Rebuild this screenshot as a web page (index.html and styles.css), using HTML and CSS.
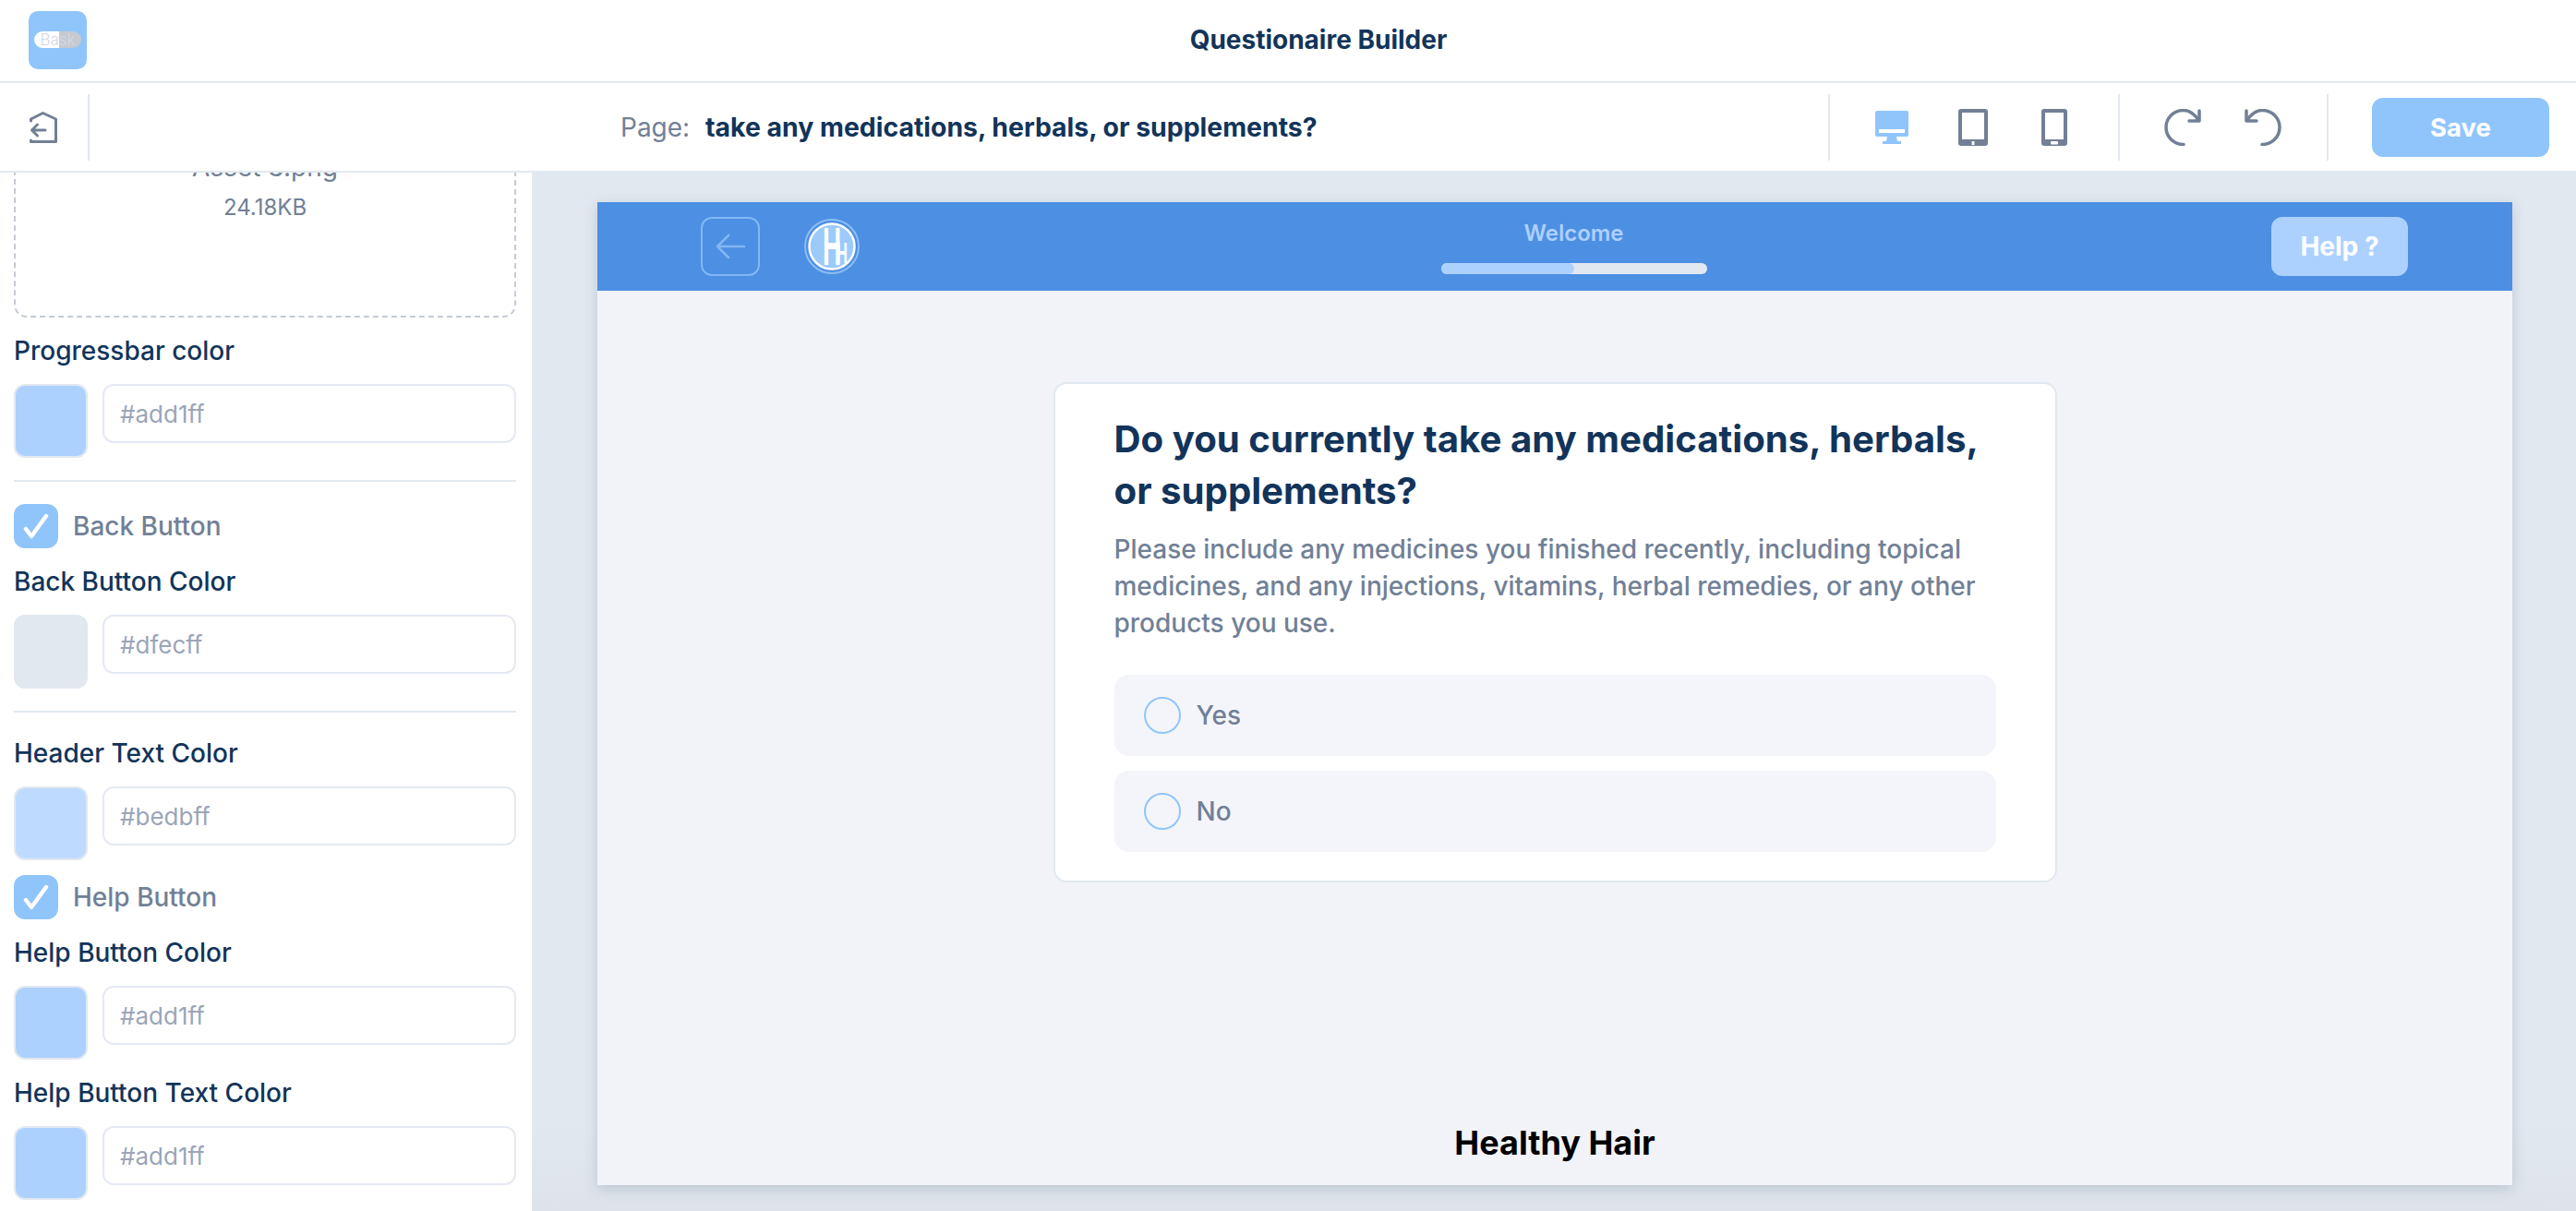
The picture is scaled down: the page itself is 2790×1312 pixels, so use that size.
FILE: index.html
```html
<!DOCTYPE html>
<html lang="en">
<head>
<meta charset="UTF-8">
<meta name="viewport" content="width=device-width, initial-scale=1.0">
<title>Questionaire Builder</title>
<link rel="stylesheet" href="styles.css">
</head>
<body>
<header class="topbar">
  <div class="brand">
    <span class="brand-pill">Bask</span>
  </div>
  <h1 class="topbar-title">Questionaire Builder</h1>
</header>

<div class="toolbar">
  <div class="toolbar-back">
    <svg class="icon-exit" viewBox="0 0 30 34" fill="none" stroke="#718096" stroke-width="3" stroke-linejoin="round" stroke-linecap="round">
      <path d="M1.5 10V8L14.5 1.5L28.5 8V32.5H1.5V31"/>
      <path d="M17 20H2.5M8.5 14L2.5 20L8.5 26"/>
    </svg>
  </div>
  <div class="toolbar-page">
    <span class="page-label">Page:</span>
    <span class="page-name">take any medications, herbals, or supplements?</span>
  </div>
  <div class="toolbar-devices">
    <svg class="icon-desktop" viewBox="0 0 36 36">
      <rect width="36" height="28" rx="2" fill="#90c5fb"/>
      <rect x="4" y="20" width="28" height="4" fill="#fff"/>
      <path d="M13 28H23L24 33H28V36H8V33H12Z" fill="#90c5fb"/>
    </svg>
    <svg class="icon-tablet" viewBox="0 0 32 40">
      <rect width="32" height="40" rx="3" fill="#718096"/>
      <rect x="4" y="4" width="24" height="29" fill="#fff"/>
      <rect x="14.5" y="35" width="3" height="4" fill="#fff"/>
    </svg>
    <svg class="icon-phone" viewBox="0 0 28 40">
      <rect width="28" height="40" rx="3" fill="#718096"/>
      <rect x="4" y="4" width="20" height="29" fill="#fff"/>
      <rect x="10" y="35" width="8" height="3.5" rx="1" fill="#fff"/>
    </svg>
  </div>
  <div class="toolbar-history">
    <svg class="icon-history" viewBox="0 0 40 40" fill="none" stroke="#718096" stroke-width="3.5" stroke-linecap="round" stroke-linejoin="round">
      <path d="M21 38.5C10 38.5 2 30 2 20C2 10 10 1.5 21 1.5C28 1.5 33 6 37 12"/>
      <path d="M38 2V13H27"/>
    </svg>
    <svg class="icon-history" viewBox="0 0 40 40" fill="none" stroke="#718096" stroke-width="3.5" stroke-linecap="round" stroke-linejoin="round">
      <path d="M19 38.5C30 38.5 38 30 38 20C38 10 30 1.5 19 1.5C12 1.5 7 6 3 12"/>
      <path d="M2 2V13H13"/>
    </svg>
  </div>
  <div class="toolbar-save">
    <button class="save-btn">Save</button>
  </div>
</div>

<div class="workspace">
  <aside class="sidebar">
    <div class="upload-box">
      <p class="upload-name">Asset 3.png</p>
      <p class="upload-size">24.18KB</p>
    </div>

    <p class="field-label">Progressbar color</p>
    <div class="color-row">
      <span class="swatch swatch-blue"></span>
      <input class="color-input" type="text" placeholder="#add1ff">
    </div>

    <hr class="divider">

    <div class="check-row">
      <span class="checkbox">
        <svg viewBox="0 0 28 28" fill="none" stroke="#fff" stroke-width="4.4" stroke-linecap="round" stroke-linejoin="round"><path d="M3 17L9 25L25 3"/></svg>
      </span>
      <span class="check-label">Back Button</span>
    </div>
    <p class="field-label">Back Button Color</p>
    <div class="color-row">
      <span class="swatch swatch-grey"></span>
      <input class="color-input" type="text" placeholder="#dfecff">
    </div>

    <hr class="divider">

    <p class="field-label field-label-wide">Header Text Color</p>
    <div class="color-row">
      <span class="swatch swatch-pale"></span>
      <input class="color-input" type="text" placeholder="#bedbff">
    </div>

    <div class="check-row check-row-tight">
      <span class="checkbox">
        <svg viewBox="0 0 28 28" fill="none" stroke="#fff" stroke-width="4.4" stroke-linecap="round" stroke-linejoin="round"><path d="M3 17L9 25L25 3"/></svg>
      </span>
      <span class="check-label">Help Button</span>
    </div>
    <p class="field-label">Help Button Color</p>
    <div class="color-row">
      <span class="swatch swatch-blue"></span>
      <input class="color-input" type="text" placeholder="#add1ff">
    </div>

    <p class="field-label">Help Button Text Color</p>
    <div class="color-row">
      <span class="swatch swatch-blue"></span>
      <input class="color-input" type="text" placeholder="#add1ff">
    </div>
  </aside>

  <main class="canvas">
    <section class="preview">
      <div class="preview-header">
        <div class="preview-left">
          <button class="preview-back">
            <svg viewBox="0 0 32 28" fill="none" stroke="#83b7f3" stroke-width="2.6" stroke-linecap="round" stroke-linejoin="round"><path d="M31 14H2M14 2L2 14L14 26"/></svg>
          </button>
          <svg class="preview-logo" viewBox="0 0 60 60">
            <circle cx="30" cy="30" r="29" fill="#4c8fe3" stroke="#8dbdf5" stroke-width="2"/>
            <circle cx="30" cy="30" r="24.5" fill="#9ccaf9" stroke="#fff" stroke-width="2.5"/>
            <text class="logo-big" transform="translate(20 50) scale(.82 1.71)">H</text>
            <text class="logo-small" transform="translate(35 48) scale(.83 1.6)">H</text>
          </svg>
        </div>
        <div class="preview-progress">
          <span class="progress-title">Welcome</span>
          <div class="progress-track">
            <div class="progress-fill" style="width: 50%"></div>
          </div>
        </div>
        <button class="help-btn">Help ?</button>
      </div>

      <div class="question-card">
        <h2 class="question-title">Do you currently take any medications, herbals, or supplements?</h2>
        <p class="question-desc">Please include any medicines you finished recently, including topical medicines, and any injections, vitamins, herbal remedies, or any other products you use.</p>
        <div class="option"><span class="radio"></span>Yes</div>
        <div class="option"><span class="radio"></span>No</div>
      </div>

      <footer class="preview-footer">Healthy Hair</footer>
    </section>
  </main>
</div>
</body>
</html>
```

FILE: styles.css
```css
html, body {
  margin: 0;
  padding: 0;
  height: 100%;
  overflow: hidden;
}

body {
  display: flex;
  flex-direction: column;
  font-family: 'Inter', 'Liberation Sans', sans-serif;
  color: #12345a;
  background-color: #fff;
}

button {
  font-family: inherit;
  border: none;
  cursor: pointer;
}

/* top bar */
.topbar {
  height: 90px;
  box-sizing: border-box;
  flex-shrink: 0;
  display: flex;
  align-items: center;
  padding: 0 28px 2px 31px;
  border-bottom: 2px solid #e2e8f0;
  background-color: #fff;
}

.brand {
  width: 63px;
  height: 63px;
  border-radius: 10px;
  background-color: #90c5fb;
  display: flex;
  align-items: center;
  justify-content: center;
}

.brand-pill {
  width: 51px;
  height: 18px;
  border-radius: 9px;
  background: linear-gradient(90deg, #fff 52%, #c6cad0 52%);
  color: #d3d9e3;
  font-size: 17px;
  font-weight: 300;
  line-height: 18px;
  text-align: center;
}

.topbar-title {
  margin: 0 auto;
  font-size: 28px;
  font-weight: 700;
  color: #12345a;
}

/* toolbar */
.toolbar {
  height: 97px;
  box-sizing: border-box;
  flex-shrink: 0;
  display: flex;
  align-items: center;
  border-bottom: 2px solid #e2e8f0;
  background-color: #fff;
  position: relative;
  z-index: 2;
}

.toolbar-back {
  width: 97px;
  height: 72px;
  box-sizing: border-box;
  border-right: 2px solid #e2e8f0;
  padding-left: 32px;
  display: flex;
  align-items: center;
}

.icon-exit {
  width: 30px;
  height: 34px;
}

.toolbar-page {
  flex: 1;
  padding-left: 575px;
  font-size: 28px;
}

.page-label {
  color: #718096;
  margin-right: 9px;
}

.page-name {
  font-size: 28.4px;
  font-weight: 700;
  color: #12345a;
}

.toolbar-devices,
.toolbar-history,
.toolbar-save {
  height: 72px;
  box-sizing: border-box;
  display: flex;
  align-items: center;
  border-left: 2px solid #e2e8f0;
}

.toolbar-devices {
  width: 314px;
  padding-left: 49px;
}

.icon-desktop {
  width: 36px;
  height: 36px;
}

.icon-tablet {
  width: 32px;
  height: 40px;
  margin-left: 54px;
}

.icon-phone {
  width: 28px;
  height: 40px;
  margin-left: 58px;
}

.toolbar-history {
  width: 226px;
  padding-left: 48px;
  gap: 47px;
}

.icon-history {
  width: 40px;
  height: 40px;
}

.toolbar-save {
  width: 270px;
  padding-left: 47px;
}

.save-btn {
  width: 192px;
  height: 64px;
  border-radius: 12px;
  background-color: #90c5fb;
  color: #fff;
  font-size: 27.5px;
  font-weight: 700;
}

/* workspace */
.workspace {
  flex: 1;
  min-height: 0;
  display: flex;
}

.sidebar {
  width: 576px;
  box-sizing: border-box;
  flex-shrink: 0;
  padding: 0 17px 0 15px;
  overflow: hidden;
  background-color: #fff;
}

.upload-box {
  height: 218px;
  box-sizing: border-box;
  margin-top: -61px;
  padding-top: 33px;
  border: 2px dashed #c4cbd6;
  border-radius: 14px;
  text-align: center;
  color: #718096;
}

.upload-name {
  margin: 0;
  font-size: 28px;
  line-height: 40px;
}

.upload-size {
  margin: 4px 0 0;
  font-size: 24px;
  line-height: 40px;
}

.field-label {
  margin: 18px 0 0;
  font-size: 28px;
  font-weight: 500;
  line-height: 36px;
  color: #12345a;
}

.field-label-wide {
  margin-top: 26px;
}

.color-row {
  display: flex;
  gap: 16px;
  align-items: flex-start;
  margin-top: 18px;
}

.swatch {
  width: 80px;
  height: 80px;
  box-sizing: border-box;
  flex-shrink: 0;
  border: 2px solid #e2e8f0;
  border-radius: 12px;
}

.swatch-blue {
  background-color: #add1ff;
}

.swatch-grey {
  background-color: #e2e8f0;
}

.swatch-pale {
  background-color: #bedbff;
}

.color-input {
  flex: 1;
  min-width: 0;
  height: 64px;
  box-sizing: border-box;
  padding: 0 17px;
  border: 2px solid #e5e9f5;
  border-radius: 12px;
  outline: none;
  font-family: inherit;
  font-size: 26px;
}

.color-input::placeholder {
  color: #9aa5b8;
}

.divider {
  height: 2px;
  margin: 24px 0 0;
  border: none;
  background-color: #e2e8f0;
}

.check-row {
  display: flex;
  align-items: center;
  gap: 16px;
  margin-top: 24px;
}

.check-row-tight {
  margin-top: 16px;
}

.checkbox {
  width: 48px;
  height: 48px;
  border-radius: 12px;
  background-color: #90c5fb;
  display: flex;
  align-items: center;
  justify-content: center;
}

.checkbox svg {
  width: 28px;
  height: 28px;
}

.check-label {
  font-size: 28px;
  font-weight: 500;
  color: #718096;
}

/* canvas + preview */
.canvas {
  flex: 1;
  min-width: 0;
  display: flex;
  padding: 32px 69px 28px 71px;
  background: linear-gradient(180deg, #e2e8f0 92%, #dee3eb 100%);
}

.preview {
  flex: 1;
  display: flex;
  flex-direction: column;
  background-color: #f1f3f9;
  box-shadow: 0 4px 14px rgba(100, 116, 139, 0.28);
}

.preview-header {
  height: 96px;
  box-sizing: border-box;
  flex-shrink: 0;
  display: flex;
  align-items: center;
  justify-content: space-between;
  padding: 0 113px 0 112px;
  background-color: #4c8fe3;
}

.preview-left {
  display: flex;
  align-items: center;
  gap: 48px;
}

.preview-back {
  width: 64px;
  height: 64px;
  box-sizing: border-box;
  padding: 0;
  border: 2px solid #83b7f3;
  border-radius: 12px;
  background: none;
  display: flex;
  align-items: center;
  justify-content: center;
}

.preview-back svg {
  width: 32px;
  height: 28px;
}

.preview-logo {
  width: 60px;
  height: 60px;
}

.logo-big {
  font-family: 'Liberation Sans', sans-serif;
  font-weight: 700;
  font-size: 34px;
  fill: #fff;
}

.logo-small {
  font-family: 'Liberation Sans', sans-serif;
  font-weight: 700;
  font-size: 20px;
  fill: #fff;
}

.preview-progress {
  width: 288px;
  margin-left: 18px;
  text-align: center;
}

.progress-title {
  display: block;
  font-size: 24px;
  font-weight: 600;
  line-height: 30px;
  color: #add1ff;
}

.progress-track {
  height: 12px;
  margin-top: 17px;
  border-radius: 6px;
  background-color: #e2e8f0;
  overflow: hidden;
}

.progress-fill {
  height: 100%;
  border-radius: 6px;
  background-color: #add1ff;
}

.help-btn {
  width: 148px;
  height: 64px;
  border-radius: 12px;
  background-color: #add1ff;
  color: #fff;
  font-size: 28px;
  font-weight: 700;
}

.question-card {
  width: 1087px;
  box-sizing: border-box;
  margin: 99px auto 0;
  padding: 32px 64px 31px;
  border: 2px solid #e2e8f0;
  border-radius: 14px;
  background-color: #fff;
}

.question-title {
  margin: 0;
  font-size: 40.2px;
  font-weight: 700;
  line-height: 56px;
  color: #12345a;
}

.question-desc {
  margin: 15px 0 0;
  font-size: 28px;
  font-weight: 500;
  line-height: 40px;
  color: #718096;
}

.option {
  height: 88px;
  display: flex;
  align-items: center;
  gap: 17px;
  margin-top: 16px;
  padding-left: 32px;
  border-radius: 16px;
  background-color: #f4f5fa;
  font-size: 28px;
  font-weight: 500;
  color: #718096;
}

.question-desc + .option {
  margin-top: 36px;
}

.radio {
  width: 40px;
  height: 40px;
  box-sizing: border-box;
  border: 2px solid #90c5fb;
  border-radius: 50%;
}

.preview-footer {
  margin-top: auto;
  padding-bottom: 24px;
  text-align: center;
  font-size: 36px;
  font-weight: 700;
  line-height: 44px;
  color: #000;
}
```
